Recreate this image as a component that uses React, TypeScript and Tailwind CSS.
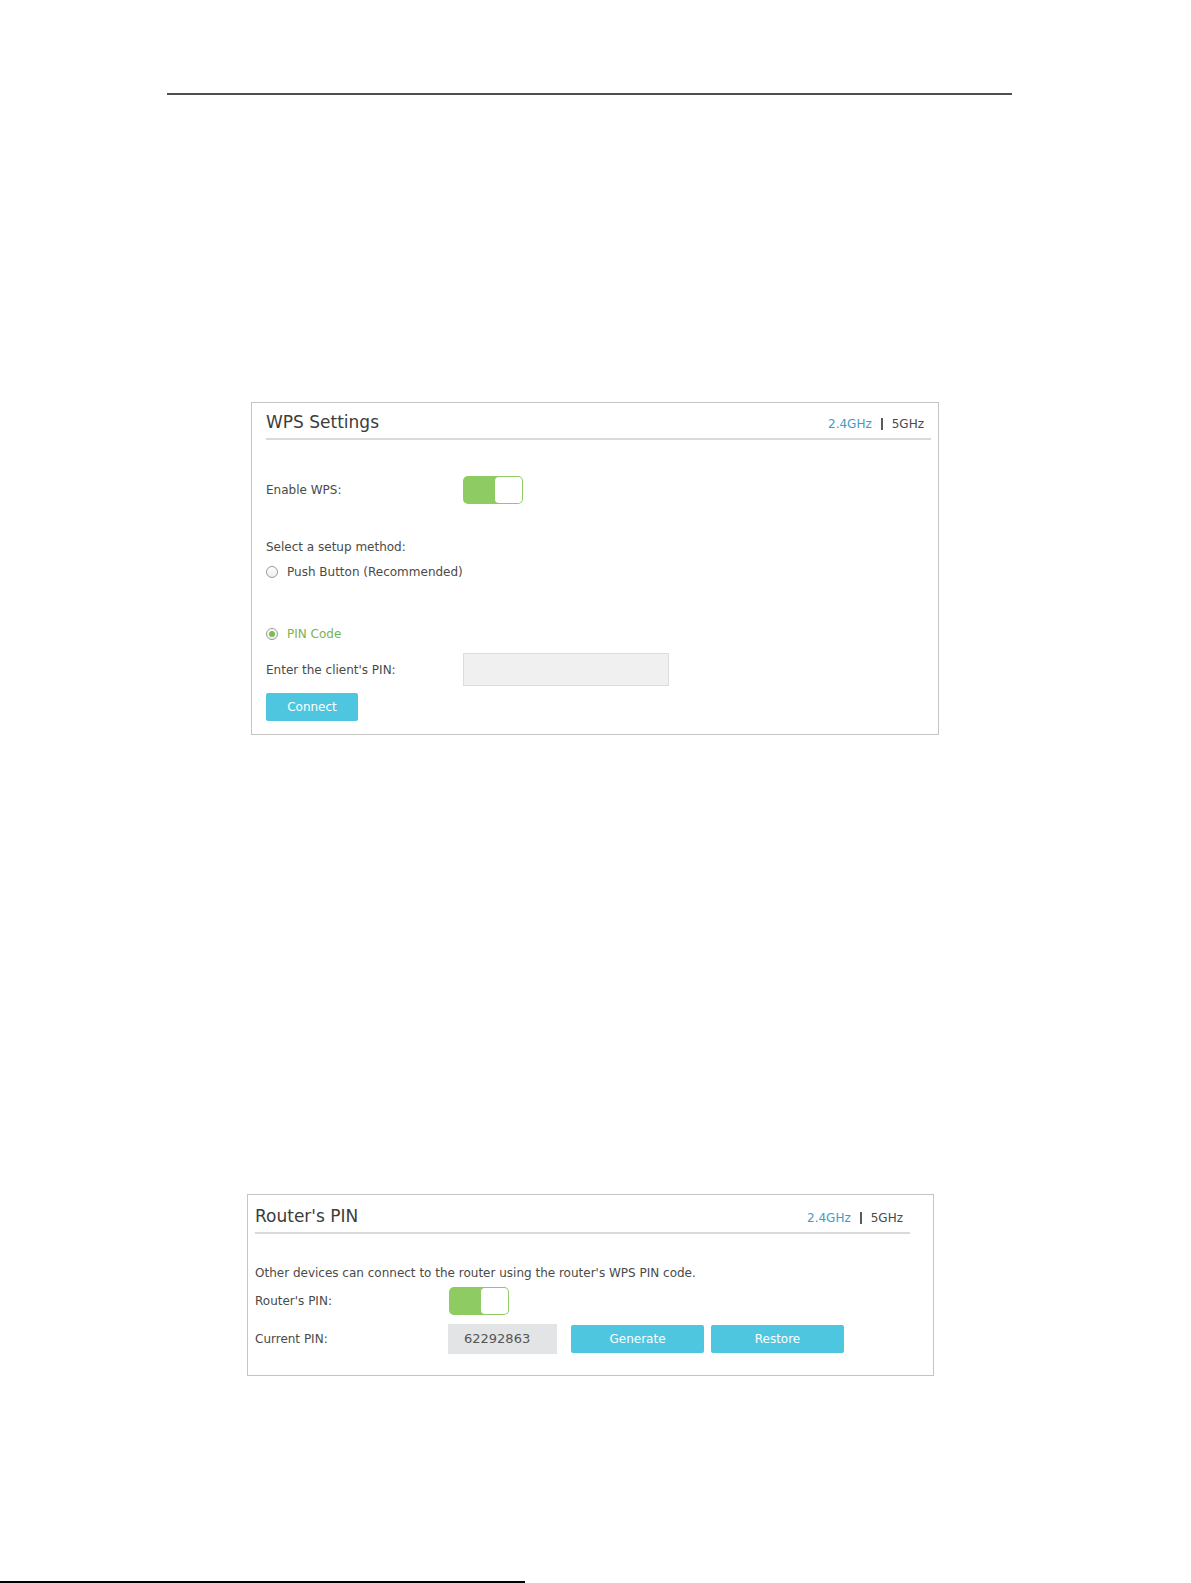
import React from 'react';

const font = { fontFamily: '"DejaVu Sans", "Liberation Sans", sans-serif' };

function Toggle() {
  return (
    <div className="flex h-[28px] w-[60px] justify-end rounded-[5px] bg-[#8fcb63] p-[1px]">
      <div className="h-full w-[27px] rounded-[4px] bg-white" />
    </div>
  );
}

function Radio({ checked }: { checked?: boolean }) {
  return (
    <span className="flex h-[12px] w-[12px] items-center justify-center rounded-full border border-[#9a9a9a] bg-gradient-to-b from-white to-[#eeeeee]">
      {checked && <span className="h-[6px] w-[6px] rounded-full bg-[#7cbd4c]" />}
    </span>
  );
}

function Bands() {
  return (
    <div className="flex items-center gap-[9px] pr-[7px] pb-[6px] text-[12px] leading-[16px]">
      <span className="text-[#3d9dc8]">2.4GHz</span>
      <span className="h-[12px] w-[2px] bg-[#5a5a5a]" />
      <span className="text-[#4a4a4a]">5GHz</span>
    </div>
  );
}

function PanelHeader({ title, h }: { title: string; h: string }) {
  return (
    <div className={`flex ${h} items-end justify-between border-b-2 border-[#dadada]`}>
      <h2 className="pb-[5px] text-[17px] leading-[22px] text-[#3c3c3c]">{title}</h2>
      <Bands />
    </div>
  );
}

function WpsSettings() {
  return (
    <section className="ml-[251px] mt-[307px] w-[688px] border border-[#c4c4c4] pl-[14px] pr-[7px] pb-[13px] text-[12px] leading-[16px] text-[#4a4a4a]">
      <PanelHeader title="WPS Settings" h="h-[37px]" />
      <div className="mt-[36px] flex items-center">
        <span className="w-[197px]">Enable WPS:</span>
        <Toggle />
      </div>
      <p className="mt-[35px]">Select a setup method:</p>
      <label className="mt-[9px] flex items-center gap-[9px]">
        <Radio />
        <span>Push Button (Recommended)</span>
      </label>
      <label className="mt-[46px] flex items-center gap-[9px] text-[#7ab34f]">
        <Radio checked />
        <span>PIN Code</span>
      </label>
      <div className="mt-[11px] flex items-center">
        <span className="w-[197px]">Enter the client's PIN:</span>
        <div className="h-[33px] w-[206px] border border-[#dcdcdc] bg-[#f0f0f0]" />
      </div>
      <button className="mt-[7px] flex h-[28px] w-[92px] items-center justify-center rounded-[2px] bg-[#4fc6df] text-[12px] text-white">
        Connect
      </button>
    </section>
  );
}

function RouterPin() {
  return (
    <section className="ml-[247px] mt-[459px] w-[687px] border border-[#c4c4c4] pl-[7px] pr-[23px] pb-[21px] text-[12px] leading-[16px] text-[#4a4a4a]">
      <PanelHeader title="Router's PIN" h="h-[39px]" />
      <p className="mt-[31px]">Other devices can connect to the router using the router's WPS PIN code.</p>
      <div className="mt-[6px] flex items-center">
        <span className="w-[194px]">Router's PIN:</span>
        <Toggle />
      </div>
      <div className="mt-[9px] flex items-center">
        <span className="w-[193px]">Current PIN:</span>
        <div className="flex h-[30px] w-[109px] items-center bg-[#e3e4e5] pl-[16px] text-[13px] text-[#555]">62292863</div>
        <button className="ml-[14px] flex h-[28px] w-[133px] items-center justify-center rounded-[2px] bg-[#4fc6df] text-white">
          Generate
        </button>
        <button className="ml-[7px] flex h-[28px] w-[133px] items-center justify-center rounded-[2px] bg-[#4fc6df] text-white">
          Restore
        </button>
      </div>
    </section>
  );
}

export default function App() {
  return (
    <div className="relative h-screen w-full overflow-hidden bg-white" style={font}>
      <div className="pt-[93px]">
        <div className="ml-[167px] h-[2px] w-[845px] bg-[#4f4f4f]" />
      </div>
      <WpsSettings />
      <RouterPin />
      <div className="absolute bottom-0 left-0 h-[2px] w-[525px] bg-black" />
    </div>
  );
}
